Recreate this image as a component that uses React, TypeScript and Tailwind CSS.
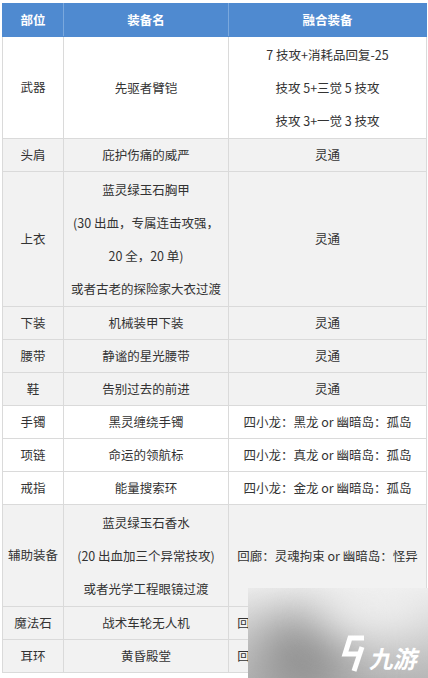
import React from "react";

type Row = {
  part: string;
  name: string[];
  fuse: string[];
  bg: "white" | "gray";
};

const rows: Row[] = [
  {
    part: "武器",
    name: ["先驱者臂铠"],
    fuse: ["7 技攻+消耗品回复-25", "技攻 5+三觉 5 技攻", "技攻 3+一觉 3 技攻"],
    bg: "white",
  },
  { part: "头肩", name: ["庇护伤痛的威严"], fuse: ["灵通"], bg: "gray" },
  {
    part: "上衣",
    name: [
      "蓝灵绿玉石胸甲",
      "(30 出血，专属连击攻强，",
      "20 全，20 单)",
      "或者古老的探险家大衣过渡",
    ],
    fuse: ["灵通"],
    bg: "gray",
  },
  { part: "下装", name: ["机械装甲下装"], fuse: ["灵通"], bg: "gray" },
  { part: "腰带", name: ["静谧的星光腰带"], fuse: ["灵通"], bg: "gray" },
  { part: "鞋", name: ["告别过去的前进"], fuse: ["灵通"], bg: "gray" },
  { part: "手镯", name: ["黑灵缠绕手镯"], fuse: ["四小龙：黑龙 or 幽暗岛：孤岛"], bg: "white" },
  { part: "项链", name: ["命运的领航标"], fuse: ["四小龙：真龙 or 幽暗岛：孤岛"], bg: "white" },
  { part: "戒指", name: ["能量搜索环"], fuse: ["四小龙：金龙 or 幽暗岛：孤岛"], bg: "white" },
  {
    part: "辅助装备",
    name: ["蓝灵绿玉石香水", "(20 出血加三个异常技攻)", "或者光学工程眼镜过渡"],
    fuse: ["回廊：灵魂拘束 or 幽暗岛：怪异"],
    bg: "gray",
  },
  { part: "魔法石", name: ["战术车轮无人机"], fuse: ["回廊：灵魂拘束 or 幽暗岛：怪异"], bg: "gray" },
  { part: "耳环", name: ["黄昏殿堂"], fuse: ["回廊：灵魂拘束 or 幽暗岛：怪异"], bg: "gray" },
];

function Lines({ items }: { items: string[] }) {
  if (items.length === 1) {
    return <div className="leading-[32px] whitespace-nowrap">{items[0]}</div>;
  }
  return (
    <div className="py-px">
      {items.map((t, i) => (
        <div key={i} className="leading-[33px] whitespace-nowrap">
          {t}
        </div>
      ))}
    </div>
  );
}

export default function App() {
  return (
    <div
      className="relative h-[678px] w-[428px] overflow-hidden bg-white pl-[2px] pt-[3px]"
      style={{ fontFamily: '"Noto Sans CJK SC", "Noto Sans", sans-serif' }}
    >
      <table className="w-[424px] table-fixed border-collapse text-[12.5px] text-[#333]">
        <colgroup>
          <col className="w-[61px]" />
          <col className="w-[165px]" />
          <col className="w-[198px]" />
        </colgroup>
        <thead>
          <tr className="bg-[#4f8ad0] text-white">
            <th className="h-[33px] border border-[#4f8ad0] border-r-[#7aa8dd] p-0 font-bold">部位</th>
            <th className="border border-[#4f8ad0] border-r-[#7aa8dd] p-0 font-bold">装备名</th>
            <th className="border border-[#4f8ad0] p-0 font-bold">融合装备</th>
          </tr>
        </thead>
        <tbody>
          {rows.map((r) => (
            <tr key={r.part} className={r.bg === "white" ? "bg-white" : "bg-[#f2f2f2]"}>
              <td className="border border-[#dadada] p-0 text-center">{r.part}</td>
              <td className="border border-[#dadada] p-0 text-center">
                <Lines items={r.name} />
              </td>
              <td className="border border-[#dadada] p-0 text-center">
                <Lines items={r.fuse} />
              </td>
            </tr>
          ))}
        </tbody>
      </table>

      {/* watermark */}
      <div className="absolute left-[248px] top-[588px] right-0 bottom-0 overflow-hidden bg-gradient-to-b from-[#ececec] via-[#cfcfcf] to-[#b8b8b8]">
        <div className="absolute left-[10px] top-[30px] h-[80px] w-[90px] rounded-full bg-[#8e8e8e] blur-xl" />
        <div className="absolute left-[70px] top-[0px] h-[40px] w-[110px] rounded-full bg-[#f4f4f4] blur-xl" />
        <div className="absolute left-[93px] top-[47px] flex items-end gap-[4px]">
          <svg width="26" height="38" viewBox="0 0 26 38">
            <path d="M23 3 L9 3 L4 19 L17 19" fill="none" stroke="white" strokeWidth="5" strokeLinejoin="miter" />
            <path d="M21 12 L13 36" fill="none" stroke="white" strokeWidth="5" />
          </svg>
          <span className="-skew-x-12 text-[24px] font-bold leading-[30px] text-white">九游</span>
        </div>
      </div>
    </div>
  );
}
